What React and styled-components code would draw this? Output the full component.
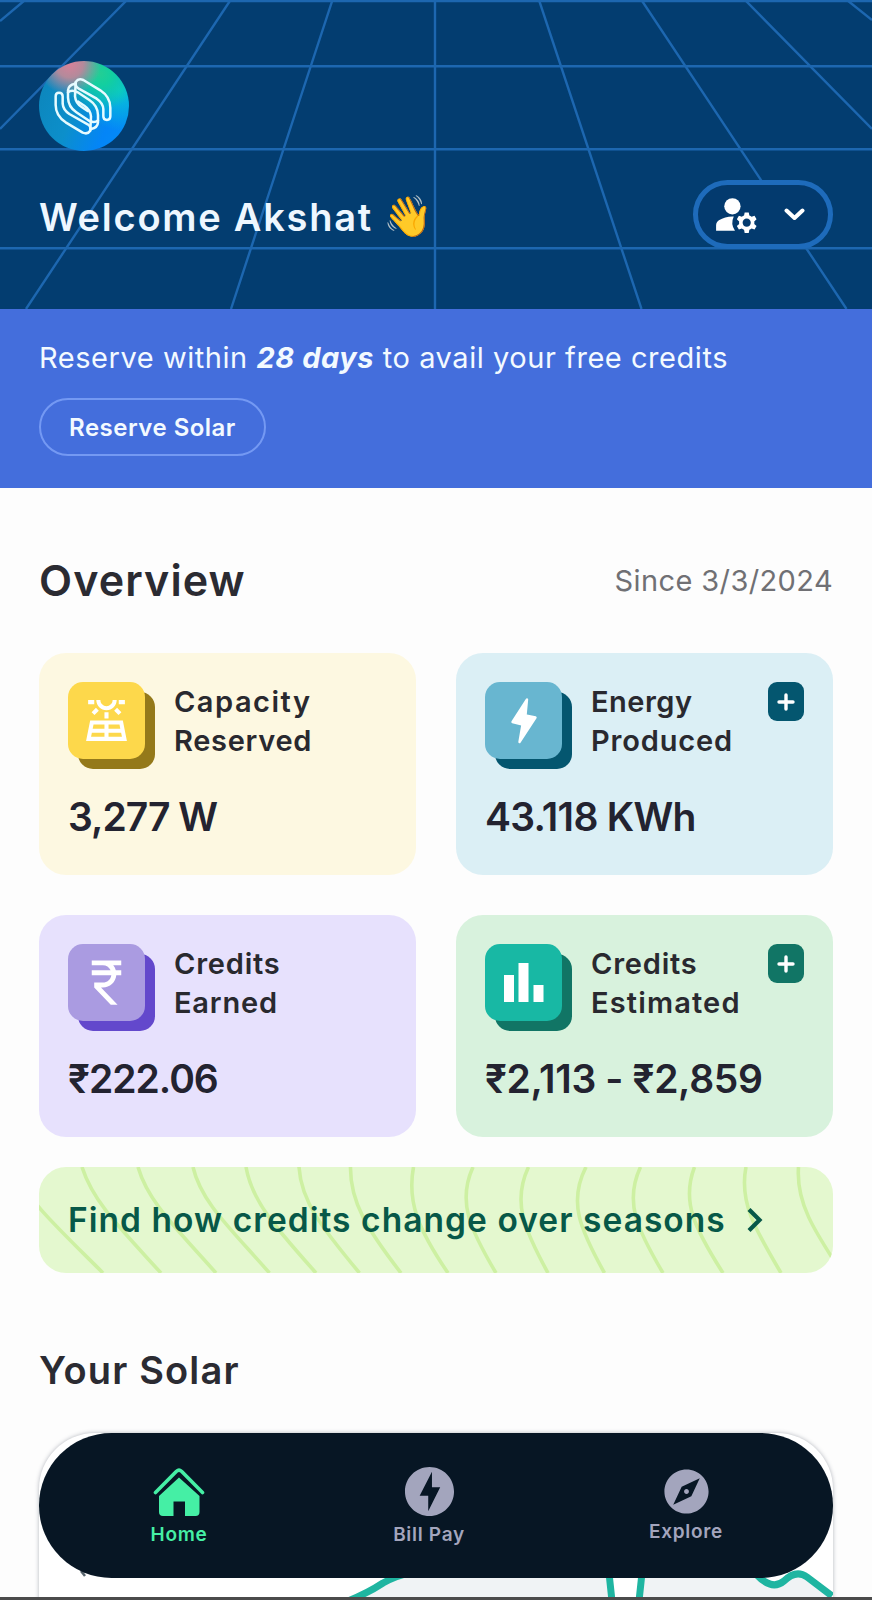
import React from 'react'
import styled, { createGlobalStyle } from 'styled-components'
import {
    MdManageAccounts,
    MdOutlineSolarPower,
    MdCurrencyRupee,
    MdOfflineBolt,
    MdExplore,
} from 'react-icons/md'

const GlobalStyle = createGlobalStyle`
    *{
        box-sizing: border-box;
        margin: 0;
        padding: 0;
    }
    body{
        background: #fdfdfd;
        font-family: Inter, "Liberation Sans", sans-serif;
    }
    svg{
        display: block;
        flex: none;
    }
`

const waves = [
    [-28, -10, 20, 64],
    [43, 54, 82, 122],
    [99, 109, 138, 177],
    [154, 162, 192, 230.5],
    [207, 213, 238, 277],
    [260, 262, 284, 320.5],
    [311.5, 311, 328, 362],
    [374.5, 368, 379, 409],
    [434, 418, 431, 457],
    [489.5, 473, 485, 509],
    [547, 529, 541, 565.5],
    [601.5, 585, 598, 624],
    [655.5, 642, 656, 684],
    [707, 700, 716, 742],
    [759.5, 757, 774, 803],
]

const BoltIcon = () => (
    <svg width="77" height="77" viewBox="0 0 77 77">
        <path d="M42 17.5 L27.5 40 L37.5 42.5 L34.5 60 L50.5 35.5 L40.5 33.5 Z" fill="#fff" stroke="#fff" strokeWidth="2.4" strokeLinejoin="round" />
    </svg>
)

const BarsIcon = () => (
    <svg width="77" height="77" viewBox="0 0 77 77" fill="#fff">
        <rect x="19" y="31" width="10" height="27" />
        <rect x="33.5" y="19" width="10" height="39" />
        <rect x="48.5" y="41" width="10" height="17" />
    </svg>
)

const HomeIcon = () => (
    <svg width="52" height="50" viewBox="0 0 52 50">
        <path d="M2.5 25.5 L23.5 4.3 Q26 2 28.5 4.3 L49.5 25.5" fill="none" stroke="#45efa5" strokeWidth="3.6" strokeLinecap="round" strokeLinejoin="round" />
        <path d="M26 10.5 L46.5 29 V45 Q46.5 49 42.5 49 H32 V34.5 H20.5 V49 H10 Q6 49 6 45 V29 Z" fill="#45efa5" />
    </svg>
)

const Logo = () => (
    <svg width="90" height="90" viewBox="0 0 270 270" fill="none" stroke="#e6fbff" strokeWidth="7.5" strokeLinejoin="round" strokeLinecap="round">
        {[0, 180].map((turn) => (
            <g key={turn} transform={`rotate(${turn} 132 136)`}>
                <path d="M50 106 Q50 95 60 95 Q71 95 71 106 V128 Q72 146 91 159 L146 190 Q158 198 153 210 Q146 221 131 215 L80 184 Q50 164 50 132 Z" />
                <path d="M108 68 Q88 72 87 88 V110 Q88 138 112 154 L148 178 Q166 188 177 178" />
                <path d="M110 64 L108 106 Q110 126 128 138 L146 150" />
            </g>
        ))}
    </svg>
)

const cards = [
    {
        title: [['Capacity', 1.5], ['Reserved', 0.7]], value: '3,277 W', ls: -1,
        bg: '#fdf8e1', tile: '#fdd84b', shade: '#94791a',
        icon: <MdOutlineSolarPower size={49} />,
    },
    {
        title: [['Energy', 0.5], ['Produced', 0.85]], value: '43.118 KWh', ls: -0.7,
        bg: '#dbeff5', tile: '#68b6d0', shade: '#04566f',
        icon: <BoltIcon />, plus: true,
    },
    {
        title: [['Credits', 0.8], ['Earned', 0.8]], value: '₹222.06', ls: -1,
        bg: '#e7e1fd', tile: '#aa9be1', shade: '#6348cc',
        icon: <MdCurrencyRupee size={59} />,
    },
    {
        title: [['Credits', 0.8], ['Estimated', 1.15]], value: '₹2,113 - ₹2,859', ls: -0.35,
        bg: '#d8f2dd', tile: '#18b8a4', shade: '#117565',
        icon: <BarsIcon />, plus: true,
    },
]

const StatCard = ({ title, value, bg, tile, shade, icon, plus, ls }) => (
    <Card $bg={bg}>
        <CardTop>
            <Tile $bg={tile} $shade={shade}>{icon}</Tile>
            <CardTitle>
                {title.map(([word, spacing]) => (
                    <TitleLine key={word} $ls={spacing}>{word}</TitleLine>
                ))}
            </CardTitle>
            {plus && (
                <PlusButton $bg={shade}>
                    <svg width="18" height="18" viewBox="0 0 18 18" stroke="#fff" strokeWidth="3.4" strokeLinecap="round">
                        <path d="M9 2 V16 M2 9 H16" />
                    </svg>
                </PlusButton>
            )}
        </CardTop>
        <CardValue $ls={ls}>{value}</CardValue>
    </Card>
)

const App = () => {
    return (
        <Page>
            <GlobalStyle />
            <Header>
                <GridLines viewBox="0 0 872 309" width="872" height="309">
                    <path d="M0 1 H872 M0 66.3 H872 M0 149.3 H872 M0 248.3 H872" />
                    <path d="M435 0 V309 M332.5 0 L231 309 M230.5 0 L26 309 M127 0 L0 129 M25 0 L0 21" />
                    <path d="M539 0 L641.5 309 M641.5 0 L846.5 309 M745 0 L872 129 M847 0 L872 20" />
                </GridLines>
                <Avatar><Logo /></Avatar>
                <HeaderRow>
                    <Welcome>Welcome Akshat <Wave>👋</Wave></Welcome>
                    <AccountButton>
                        <MdManageAccounts size={49} />
                        <svg width="21" height="13" viewBox="0 0 21 13" fill="none" stroke="#fff" strokeWidth="4" strokeLinecap="round" strokeLinejoin="round">
                            <path d="M2.5 2.5 L10.5 10 L18.5 2.5" />
                        </svg>
                    </AccountButton>
                </HeaderRow>
            </Header>

            <ReserveBar>
                <p>Reserve within <em>28 days</em> to avail your free credits</p>
                <ReserveButton>Reserve Solar</ReserveButton>
            </ReserveBar>

            <Main>
                <OverviewHead>
                    <h1>Overview</h1>
                    <p>Since 3/3/2024</p>
                </OverviewHead>
                <Cards>
                    {cards.map((card, i) => <StatCard key={i} {...card} />)}
                </Cards>
                <Seasons>
                    <SeasonWaves viewBox="0 0 794 106" width="794" height="106">
                        {waves.map(([a, b, c, d]) => (
                            <path key={a} d={`M${a} 0 C${b} 35 ${c} 62 ${d} 106`} />
                        ))}
                    </SeasonWaves>
                    <span>Find how credits change over seasons</span>
                    <svg width="16" height="24" viewBox="0 0 16 24" fill="none" stroke="#075848" strokeWidth="4.2">
                        <path d="M2 1.5 L12.5 12 L2 22.5" />
                    </svg>
                </Seasons>
                <SolarTitle>Your Solar</SolarTitle>
                <SolarCard>
                    <svg width="794" height="165" viewBox="0 0 794 165">
                        <path d="M311 165 L356 145 H571 V165 Z M602 165 V145 H722 Q733 156 745 146 Q757 136 768 144 L793 163 V165 Z" fill="#f0f3f5" />
                        <path d="M309 168 Q329 160 344 150 Q358 142 372 140 M570 140 L573 168 M603 140 L600 168 M718 142 Q733 158 745 148 Q757 136 768 144 L793 163" fill="none" stroke="#1fb5a1" strokeWidth="7" />
                        <path d="M42 138 L46 143" stroke="#56636c" strokeWidth="2.5" />
                    </svg>
                </SolarCard>
            </Main>

            <Nav>
                <NavItem $active>
                    <HomeIcon />
                    <span>Home</span>
                </NavItem>
                <NavItem>
                    <MdOfflineBolt size={59} />
                    <span>Bill Pay</span>
                </NavItem>
                <NavItem $lift>
                    <MdExplore size={53} />
                    <span>Explore</span>
                </NavItem>
            </Nav>
            <BottomEdge />
        </Page>
    )
}

export default App

const Page = styled.div`
    position: relative;
    width: 872px;
    height: 1600px;
    overflow: hidden;
    background: #fdfdfd;
`

const Header = styled.header`
    position: relative;
    height: 309px;
    padding: 61px 39px 0;
    background: #033d70;
`

const GridLines = styled.svg`
    position: absolute;
    top: 0;
    left: 0;
    fill: none;
    stroke: #1d67b0;
    stroke-width: 2.4px;
`

const Avatar = styled.div`
    position: relative;
    width: 90px;
    height: 90px;
    border-radius: 50%;
    background:
        radial-gradient(circle at 34% 3%, #d78199 0, #b48a9b 13%, rgba(150, 140, 160, 0) 30%),
        radial-gradient(circle at 68% 14%, #23ce94 0, #12cfa0 12%, rgba(15, 200, 190, 0) 38%),
        radial-gradient(circle at 90% 32%, #08c8d5 0, rgba(8, 190, 225, 0) 40%),
        linear-gradient(115deg, #0d84b8 0, #0c8fcb 45%, #0485f7 75%, #048ef8 100%);
`

const HeaderRow = styled.div`
    position: relative;
    display: flex;
    align-items: center;
    justify-content: space-between;
    height: 69px;
    margin-top: 29px;
`

const Welcome = styled.h1`
    display: flex;
    align-items: center;
    gap: 10px;
    padding-top: 4px;
    font-size: 38px;
    font-weight: 600;
    line-height: 50px;
    letter-spacing: 1.75px;
    color: #eef7ff;
    white-space: nowrap;
`

const Wave = styled.span`
    font-size: 40px;
    font-family: "Noto Color Emoji", sans-serif;
    letter-spacing: 0;
`

const AccountButton = styled.button`
    display: flex;
    align-items: center;
    width: 140px;
    height: 69px;
    padding-left: 14px;
    gap: 23px;
    border: 5px solid #1e6bbb;
    border-radius: 35px;
    background: #033a6e;
    color: #fff;
`

const ReserveBar = styled.section`
    height: 179px;
    padding: 29px 39px 0;
    background: #446edc;
    color: #f3faff;
    p{
        font-size: 29px;
        line-height: 40px;
        letter-spacing: 0.55px;
        white-space: nowrap;
    }
    em{
        font-weight: 700;
    }
`

const ReserveButton = styled.button`
    width: 227px;
    height: 58px;
    margin-top: 20px;
    border: 2px solid #7499f3;
    border-radius: 29px;
    background: transparent;
    color: #f3faff;
    font: 600 24px Inter, sans-serif;
    letter-spacing: 0.48px;
    white-space: nowrap;
`

const Main = styled.main`
    display: flex;
    flex-direction: column;
    padding: 62px 39px 0;
`

const OverviewHead = styled.div`
    display: flex;
    align-items: center;
    justify-content: space-between;
    height: 60px;
    margin-bottom: 43px;
    h1{
        font-size: 43px;
        font-weight: 600;
        letter-spacing: 1.1px;
        color: #2b2b32;
    }
    p{
        font-size: 29px;
        letter-spacing: 0.38px;
        color: #707074;
    }
`

const Cards = styled.div`
    display: grid;
    grid-template-columns: 1fr 1fr;
    gap: 40px;
`

const Card = styled.article`
    height: 222px;
    padding: 29px;
    border-radius: 27px;
    background: ${(props) => props.$bg};
`

const CardTop = styled.div`
    display: flex;
    align-items: flex-start;
    height: 87px;
`

const Tile = styled.div`
    display: flex;
    align-items: center;
    justify-content: center;
    width: 77px;
    height: 77px;
    margin-right: 29px;
    border-radius: 15px;
    background: ${(props) => props.$bg};
    box-shadow: 10px 10px 0 ${(props) => props.$shade};
    color: #fff;
`

const CardTitle = styled.h2`
    display: flex;
    flex: 1;
    flex-direction: column;
    font-size: 29px;
    font-weight: 600;
    line-height: 39px;
    color: #29292f;
`

const TitleLine = styled.span`
    letter-spacing: ${(props) => props.$ls}px;
`

const PlusButton = styled.button`
    display: flex;
    align-items: center;
    justify-content: center;
    width: 36px;
    height: 39px;
    border: 0;
    border-radius: 9px;
    background: ${(props) => props.$bg};
`

const CardValue = styled.p`
    margin-top: 23px;
    font-size: 39px;
    font-weight: 600;
    line-height: 50px;
    letter-spacing: ${(props) => props.$ls}px;
    color: #232330;
    white-space: nowrap;
`

const Seasons = styled.div`
    position: relative;
    display: flex;
    align-items: center;
    height: 106px;
    margin-top: 30px;
    padding-left: 29px;
    border-radius: 27px;
    overflow: hidden;
    background: #e4f8cf;
    color: #075848;
    span{
        position: relative;
        width: 679px;
        font-size: 33.5px;
        font-weight: 600;
        letter-spacing: 1.05px;
        white-space: nowrap;
    }
    svg{
        position: relative;
    }
`

const SeasonWaves = styled.svg`
    && {
        position: absolute;
        top: 0;
        left: 0;
    }
    fill: none;
    stroke: #cdf0a2;
    stroke-width: 3.6px;
`

const SolarTitle = styled.h2`
    margin: 72px 0 38px;
    font-size: 38px;
    font-weight: 600;
    line-height: 50px;
    letter-spacing: 1.15px;
    color: #2b2b32;
`

const SolarCard = styled.div`
    height: 200px;
    border-radius: 56px 56px 0 0;
    background: #fff;
    box-shadow: 0 0 4px rgba(40, 50, 70, 0.35);
    overflow: hidden;
`

const Nav = styled.nav`
    position: absolute;
    left: 39px;
    bottom: 22px;
    display: grid;
    grid-template-columns: 280px 220px 294px;
    width: 794px;
    height: 145px;
    border-radius: 73px;
    background: #071624;
`

const NavItem = styled.a`
    display: flex;
    flex-direction: column;
    align-items: center;
    padding-top: ${(props) => (props.$active ? 34 : props.$lift ? 32 : 29)}px;
    color: ${(props) => (props.$active ? '#45efa5' : '#a3a5bd')};
    font-size: 19px;
    font-weight: 600;
    line-height: 24px;
    letter-spacing: 0.7px;
    span{
        margin-top: ${(props) => (props.$active ? 6 : 2)}px;
    }
`

const BottomEdge = styled.div`
    position: absolute;
    left: 0;
    right: 0;
    bottom: 0;
    height: 3px;
    background: #4b4b4b;
`
